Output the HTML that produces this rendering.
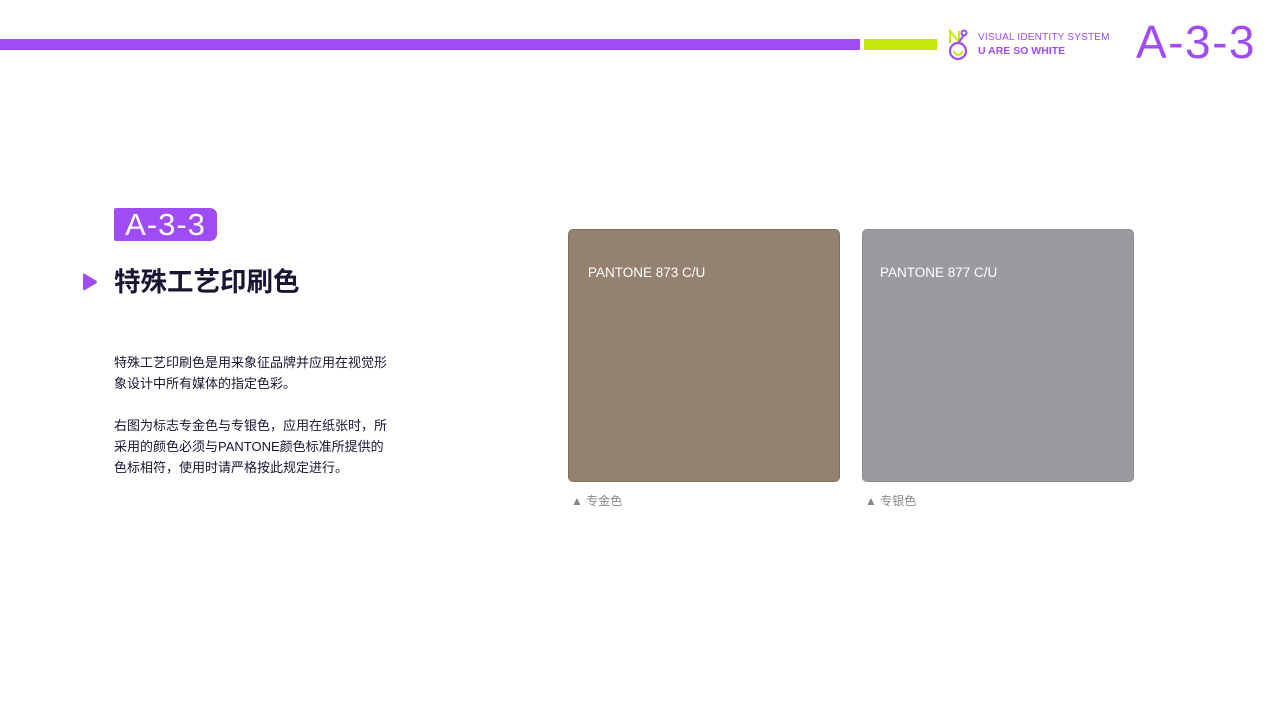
<!DOCTYPE html>
<html><head><meta charset="utf-8"><style>
*{margin:0;padding:0;box-sizing:border-box}
body{width:1280px;height:720px;background:#fff;position:relative;overflow:hidden;font-family:"Liberation Sans","Noto Sans CJK SC",sans-serif}
.a{position:absolute}
</style></head><body>
<div class="a" style="left:0;top:39px;width:860px;height:11px;background:#a04cf5"></div>
<div class="a" style="left:864px;top:39px;width:73px;height:11px;background:#c3ea0c"></div>
<svg class="a" style="left:947px;top:27px" width="24" height="36" viewBox="0 0 24 36">
<path d="M3 16 V4 L12 15 V4" fill="none" stroke="#c3ea0c" stroke-width="2"/>
<path d="M12 15 L17 8" stroke="#a04cf5" stroke-width="2"/>
<circle cx="17" cy="6" r="2.5" fill="none" stroke="#a04cf5" stroke-width="2"/>
<circle cx="11" cy="24" r="8" fill="none" stroke="#a04cf5" stroke-width="2.2"/>
<path d="M7 24 a4 4 0 0 0 8 0" fill="none" stroke="#c3ea0c" stroke-width="2"/>
</svg>
<div class="a" style="left:978px;top:32px;font-size:10px;color:#a04cf5;letter-spacing:0.2px">VISUAL IDENTITY SYSTEM</div>
<div class="a" style="left:978px;top:45px;font-size:10.5px;color:#a04cf5;font-weight:bold">U ARE SO WHITE</div>
<div class="a" style="left:1136px;top:15px;font-size:46px;color:#a04cf5;line-height:54px;letter-spacing:1.5px">A-3-3</div>
<div class="a" style="left:114px;top:208px;width:103px;height:33px;background:#a04cf5;border-radius:2px 7px 7px 2px;color:#fff;font-size:31px;line-height:33px;text-align:center;letter-spacing:1px">A-3-3</div>
<svg class="a" style="left:82px;top:273px" width="16" height="18"><path d="M1 2 Q1 0 3 1 L14 7.5 Q16 9 14 10.5 L3 17 Q1 18 1 16Z" fill="#a04cf5"/></svg>
<div class="a" style="left:114px;top:265px;font-size:26.5px;color:#1b1433;line-height:34px;font-weight:bold">特殊工艺印刷色</div>
<div class="a" style="left:114px;top:352px;width:276px;font-size:13px;color:#1b1433;line-height:21px">特殊工艺印刷色是用来象征品牌并应用在视觉形象设计中所有媒体的指定色彩。<br><br>右图为标志专金色与专银色，应用在纸张时，所采用的颜色必须与PANTONE颜色标准所提供的色标相符，使用时请严格按此规定进行。</div>
<div class="a" style="left:568px;top:229px;width:272px;height:253px;background:#948170;border:1px solid #86735f;border-radius:5px"></div>
<div class="a" style="left:588px;top:265px;font-size:13.5px;color:#fff">PANTONE 873 C/U</div>
<div class="a" style="left:862px;top:229px;width:272px;height:253px;background:#9c9a9f;border:1px solid #8d8b90;border-radius:5px"></div>
<div class="a" style="left:880px;top:265px;font-size:13.5px;color:#fff">PANTONE 877 C/U</div>
<div class="a" style="left:571px;top:492px;font-size:12px;color:#888">▲ 专金色</div>
<div class="a" style="left:865px;top:492px;font-size:12px;color:#888">▲ 专银色</div>
</body></html>
